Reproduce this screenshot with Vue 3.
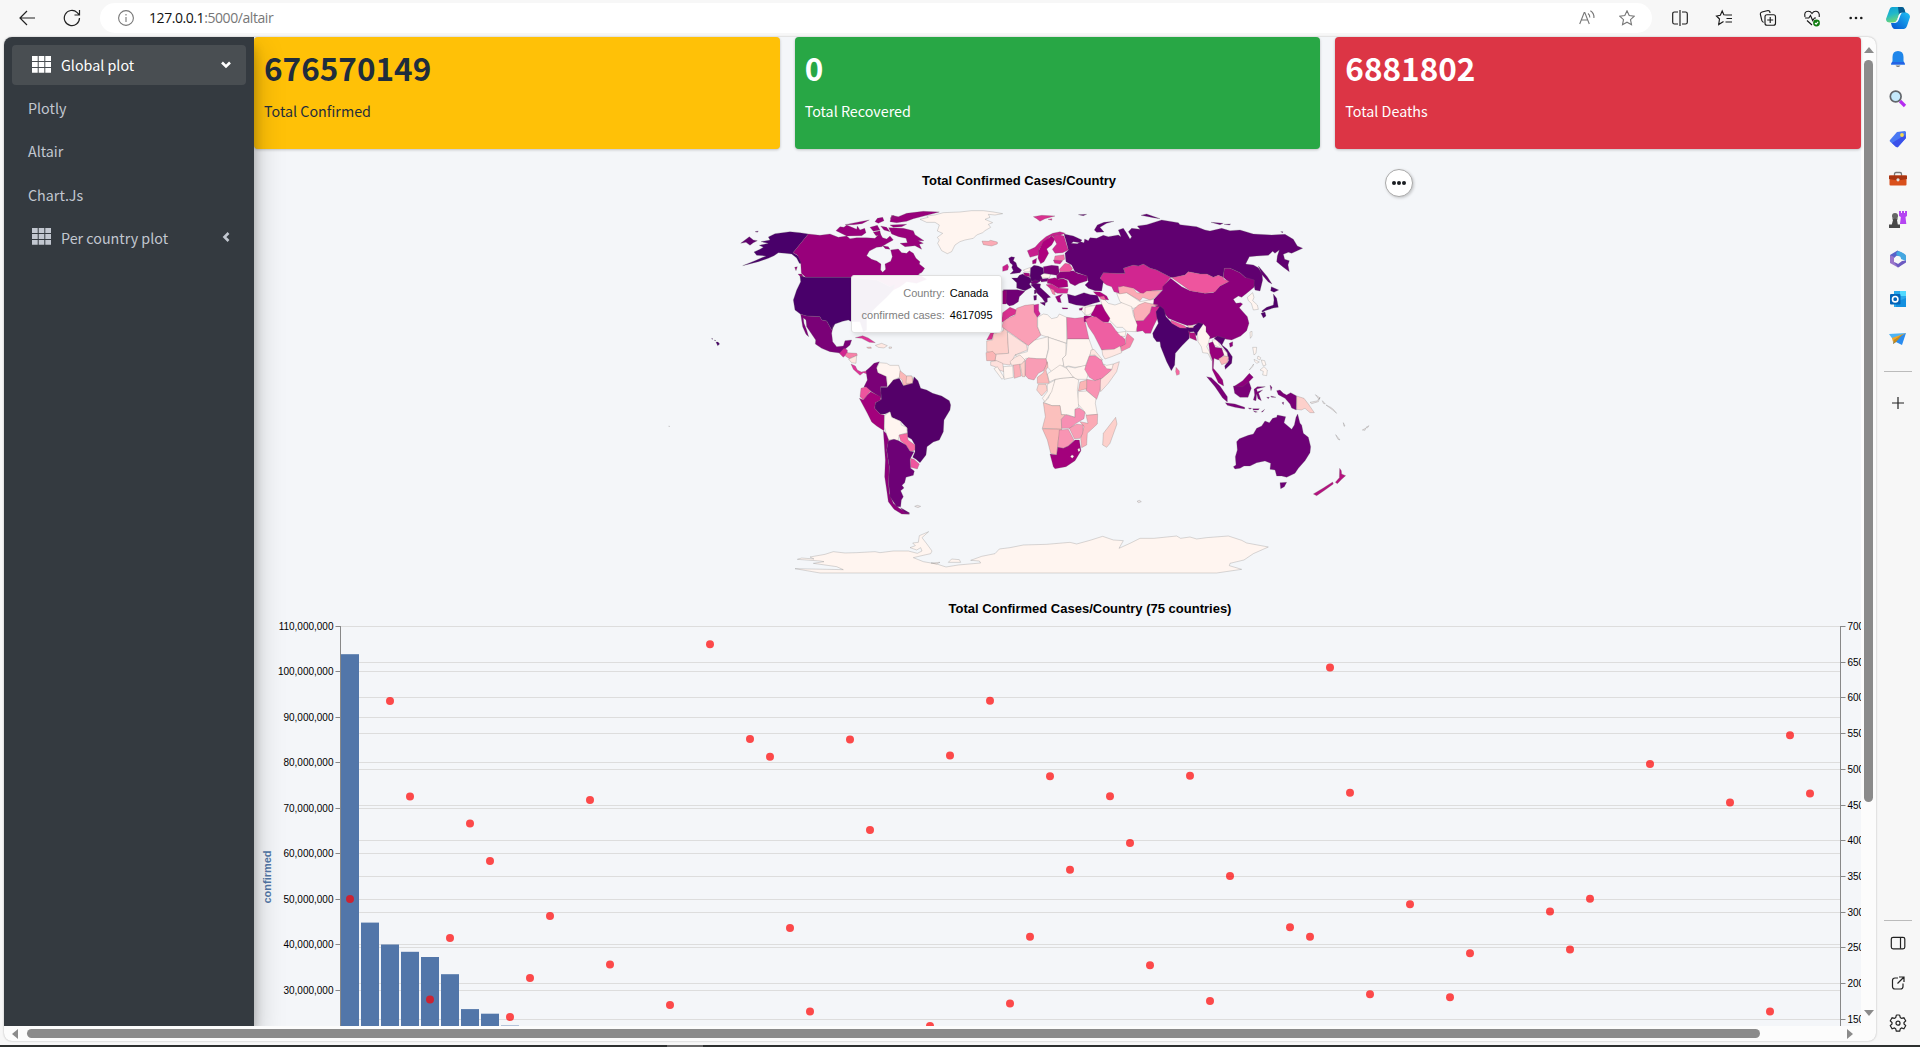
<script setup>
const cards = [
  { value: '676570149', label: 'Total Confirmed', tone: 'warning' },
  { value: '0', label: 'Total Recovered', tone: 'success' },
  { value: '6881802', label: 'Total Deaths', tone: 'danger' },
]

// Country outlines, grouped by region; each group has its own origin and a 3:1 grid.
const c = (fill, d) => ({ fill, d })
const regions = [
  {
    origin: '660 190',
    shapes: [
      c('#49006a', 'M282,186L300,178 310,172 298,166 325,160 303,155 330,150 325,141 345,131 390,125 420,128 445,132 399,188 410,195 424,205 428,222 418,220 410,204 395,192 375,190 355,188 342,197 325,205 295,215 248,227 285,212 318,198 290,196Z'),
      c('#60006e', 'M242,160L255,150 268,140 280,150 292,152 280,158 270,166 258,157ZM285,125L295,123 292,127Z'),
      c('#98007b', 'M445,132L480,136 510,132 535,142 560,138 570,146 590,143 620,143 645,145 660,130 668,143 680,147 690,138 700,150 682,160 665,170 650,172 628,183 620,197 635,208 650,213 663,222 662,240 668,247 677,238 675,222 692,214 697,200 692,180 715,177 725,188 740,190 748,182 760,190 768,205 780,215 778,222 794,235 786,247 775,253 800,268 770,280 740,275 720,290 700,300 690,290 650,270 575,262 437,262 424,250 422,215 412,195 399,188ZM404,232L412,230 408,242ZM414,252L425,252 437,270 428,268Z'),
      c('#98007b', 'M528,122L540,110 552,112 560,105 590,118 592,108 600,120 614,115 618,128 605,137 560,138ZM555,104L600,95 628,90 606,101 580,104ZM645,95L652,85 668,82 672,92 655,100ZM630,112L652,106 660,120 640,124ZM662,108L680,112 690,125 672,120ZM690,95L695,76 715,80 740,70 790,64 838,66 800,76 760,86 740,94 710,98ZM690,105L740,103 725,110 700,112ZM686,113L730,115 760,122 765,134 792,152 775,152 790,160 778,163 785,178 765,167 735,170 720,160 742,158 738,145 716,140 695,132ZM640,127L660,122 662,135 648,137ZM668,167L685,170 690,178 676,176ZM690,85L702,76 706,84Z'),
      c('#49006a', 'M437,262L575,262 650,270 690,290 705,283 700,300 680,322 655,345 620,380 620,420 610,425 600,395 575,395 565,390 548,394 525,402 515,420 500,393 485,390 480,380 440,378 422,373 405,360 400,330 410,300 422,275 420,258Z'),
      c('#7a0177', 'M422,373L440,378 480,380 485,390 500,393 515,420 520,405 515,430 518,455 530,470 550,468 555,452 575,450 570,465 555,478 545,490 510,485 485,475 466,462 467,450 440,410 438,390 430,384 432,400 440,420 446,440 438,433 428,410Z'),
      c('#d12690', 'M538,490L552,475 562,480 562,490 550,502Z'),
      c('#f781a8', 'M560,488L590,490 592,496 578,502 568,506 555,497Z'),
      c('#fee7e1', 'M566,508L590,497 588,520 575,518Z'),
      c('#dd3497', 'M573,522L586,528 592,540 604,546 622,542 622,552 610,548 600,556 580,538ZM586,443L608,437 625,444 646,458 628,457 605,445Z'),
      c('#fbb8b8', 'M620,472L633,471 634,475 624,475Z'),
      c('#ffe9e3', 'M646,466L665,460 682,467 672,474 655,472ZM687,471L695,471 694,475 687,475Z'),
      c('#49006a', 'M168,456L174,456 179,462 173,467ZM155,445L159,447 156,448ZM163,450L168,452 165,453Z'),
      c('#fff5f0', 'M780,88L805,82 800,78 825,75 850,68 900,66 935,62 970,62 1000,66 1028,71 1005,75 985,73 990,82 975,88 998,98 985,103 992,112 975,122 968,128 950,135 940,145 915,150 900,155 885,165 875,185 862,191 845,182 833,160 838,150 832,142 848,130 832,123 838,105 825,97 800,97Z'),
    ],
  },
  {
    origin: '960 190',
    shapes: [
      c('#fbaab5', 'M66,153L85,154 92,151 112,156 112,162 95,168 70,164Z'),
      c('#d9308f', 'M220,80L245,76 285,78 255,86 240,94 230,86ZM264,88L276,86 275,91Z'),
      c('#fff5f0', 'M360,356L380,345 405,348 408,360 392,370 378,377ZM470,310L500,308 540,335 580,328 590,340 555,345 520,355 500,350 480,335ZM240,250L272,252 268,264 245,264ZM190,240L212,232 210,245 196,246Z'),
      c('#d12690', 'M420,265L430,248 470,250 495,250 490,235 520,225 535,228 550,222 570,234 590,240 632,262 618,280 608,300 575,302 550,315 520,295 475,290 478,310 462,305 455,290 440,285 430,278Z'),
      c('#600070', 'M312,132L340,138 366,150 360,158 340,155 334,160 352,161 362,155 372,158 374,147 385,152 390,143 410,145 430,136 445,140 475,135 483,140 475,120 490,115 500,130 510,147 515,140 505,125 515,115 540,118 532,108 560,104 605,90 655,98 660,104 710,110 735,120 750,123 785,115 810,122 840,120 880,132 935,135 975,133 1000,148 1012,168 1028,175 1005,185 995,190 985,187 970,193 974,208 988,212 984,225 988,245 968,230 950,215 952,198 958,180 945,190 938,184 925,196 890,198 868,200 857,222 880,225 895,233 906,250 908,270 900,303 885,300 880,278 855,262 840,248 810,235 793,235 790,262 775,256 760,262 740,252 720,252 685,245 675,255 640,263 632,262 590,240 570,234 550,222 535,228 520,225 490,235 495,250 470,250 430,248 420,265 430,275 425,303 405,302 385,295 375,285 385,275 380,258 345,245 335,225 318,215 315,190 325,180 320,160Z'),
      c('#600070', 'M895,228L902,236 922,260 936,282 925,276 905,253ZM403,120L412,105 432,97 462,94 440,100 420,112 432,126 410,127ZM543,76L560,72 600,86 580,83ZM355,74L380,73 370,77ZM753,97L790,100 780,104ZM792,103L812,102 808,105ZM962,125L969,125 968,128Z'),
      c('#8c007b', 'M582,328L608,300 608,290 632,265 665,290 690,302 735,310 760,308 780,288 805,275 790,262 793,235 810,235 840,248 855,262 883,270 882,292 862,308 845,322 835,318 820,328 828,340 842,338 848,342 838,353 862,380 867,400 860,422 842,438 815,450 800,448 770,440 745,448 730,440 720,410 710,402 685,408 650,395 625,385 605,360 580,345Z'),
      c('#ee559e', 'M635,263L675,255 685,245 720,252 740,252 760,262 775,256 790,262 792,268 808,274 780,288 765,306 735,310 690,302 665,284Z'),
      c('#fff5f0', 'M862,322L878,308 882,322 878,332 892,345 895,358 880,360 874,340 865,332Z'),
      c('#50006a', 'M932,302L934,290 956,300 942,307ZM940,312L950,325 955,352 940,354 915,362 908,367 905,363 920,352 940,345 942,330ZM903,370L915,366 918,378 910,384Z'),
      c('#fbaab5', 'M475,292L490,288 520,295 530,308 550,310 560,303 605,302 582,325 570,330 548,322 540,332 500,308 478,312Z'),
      c('#fbb0b8', 'M520,360L535,345 555,337 575,342 595,345 575,350 570,368 550,392 525,393Z'),
      c('#d12690', 'M527,393L550,392 570,368 575,350 598,350 605,362 590,390 580,410 572,430 555,430 548,422 530,425Z'),
      c('#fff5f0', 'M420,325L430,325 445,340 465,345 485,338 515,350 520,375 532,405 528,425 500,424 488,412 470,412 450,392 435,372 428,350Z'),
      c('#c71f8e', 'M202,182L225,172 240,155 258,140 278,130 300,125 316,130 300,136 270,140 250,160 238,178 235,195 210,202Z'),
      c('#ae017e', 'M236,182L250,155 275,138 285,148 275,165 260,177 266,190 252,215 242,221 234,205Z'),
      c('#cf2590', 'M278,138L298,134 312,138 320,165 325,180 308,188 285,190 277,178 290,162Z'),
      c('#f26fa7', 'M285,198L312,194 314,208 300,215 282,212Z'),
      c('#d12690', 'M280,210L308,212 300,222 284,220Z'),
      c('#5a006e', 'M146,205L154,200 164,202 160,212 168,218 172,230 185,240 180,248 150,252 160,242 155,232 158,225 150,218Z'),
      c('#c91f8c', 'M128,230L142,222 146,230 143,240 128,244Z'),
      c('#540069', 'M155,264L172,264 178,256 188,252 212,264 215,275 208,282 215,292 195,302 170,294 170,278Z'),
      c('#700075', 'M130,299L172,299 195,304 178,320 175,335 160,345 148,348 138,340Z'),
      c('#940078', 'M128,302L140,302 138,342 128,342Z'),
      c('#540069', 'M212,234L222,226 235,228 250,234 252,250 242,256 248,268 236,276 214,274 210,258Z'),
      c('#a3017c', 'M190,248L208,250 210,260 195,258ZM217,212L230,205 228,220 218,222Z'),
      c('#7a0177', 'M250,230L275,226 295,228 298,250 290,256 252,250Z'),
      c('#700075', 'M212,276L225,270 240,274 225,284 215,282ZM240,268L265,265 262,274 244,276Z'),
      c('#8c007b', 'M290,256L300,246 340,242 352,250 382,258 382,272 358,280 345,287 330,280 325,270 310,265 290,268Z'),
      c('#ee559e', 'M298,238L315,220 328,222 338,236 330,245 300,245Z'),
      c('#a8017d', 'M262,268L285,263 295,268 310,266 322,272 324,290 295,294 275,282 262,280Z'),
      c('#d12690', 'M258,284L275,282 295,294 325,296 322,310 292,310 278,302Z'),
      c('#f781a8', 'M270,295L282,300 286,315 278,312Z'),
      c('#98007b', 'M286,320L308,312 300,322 304,338 294,336ZM306,353L324,354 322,357 308,357Z'),
      c('#5d006d', 'M212,284L225,280 242,282 240,292 262,312 272,322 262,324 262,336 256,338 246,324 230,308 225,296ZM240,338L256,336 255,347ZM223,300L229,300 229,310 223,312ZM221,317L230,316 229,330 222,331Z'),
      c('#5d0071', 'M322,312L345,318 372,308 392,314 412,316 420,335 402,340 375,348 348,345 326,338Z'),
      c('#b1017e', 'M400,305L420,306 440,318 446,330 430,328 410,316Z'),
      c('#f0629f', 'M418,320L432,318 438,330 424,328Z'),
      c('#98007b', 'M357,356L368,353 366,360 359,361Z'),
    ],
  },
  {
    origin: '960 290',
    shapes: [
      c('#d9308f', 'M128,68L150,52 170,60 168,72 150,80 140,88 122,100 126,84ZM80,150L92,128 102,128 96,148Z'),
      c('#fdd0cb', 'M80,153L98,150 100,132 130,122 130,112 142,125 146,190 108,193 100,190 80,185Z'),
      c('#faa0b6', 'M130,95L140,87 165,76 170,55 195,46 222,43 224,68 232,80 232,110 243,135 205,167 125,110Z'),
      c('#cf2590', 'M222,45L236,42 236,62 241,72 232,82 222,66Z'),
      c('#fff5f0', 'M233,82L250,72 262,74 275,86 292,82 298,72 320,82 320,160 265,142 243,135 233,110Z'),
      c('#f06fa8', 'M320,82L345,85 372,82 376,98 387,147 322,147Z'),
      c('#fee0dc', 'M108,193L146,190 142,125 200,165 202,180 165,195 150,225 128,222 105,212Z'),
      c('#fff5f0', 'M165,195L202,185 205,167 225,150 265,140 265,175 258,208 198,205 192,210Z'),
      c('#fff5f0', 'M265,142L318,160 318,195 308,205 312,225 275,245 262,230 258,208 266,178Z'),
      c('#fff5f0', 'M322,147L387,147 398,178 388,198 376,228 345,232 325,228 312,232 308,205 318,195Z'),
      c('#fff5f0', 'M325,230L345,234 376,226 385,250 380,268 350,268 335,258 318,232Z'),
      c('#f77fae', 'M388,198L405,197 425,210 430,225 455,240 430,264 405,272 388,262 374,238Z'),
      c('#fee7e1', 'M393,180L402,178 428,210 420,208 405,195 390,196Z'),
      c('#fff5f0', 'M430,222L440,226 460,222 460,238 440,236Z'),
      c('#fee0dc', 'M460,222L478,215 470,245 445,280 422,305 418,272 455,240Z'),
      c('#f994b3', 'M380,268L405,272 422,266 420,300 410,328 378,300Z'),
      c('#fbb5b5', 'M360,276L380,270 380,296 355,303Z'),
      c('#fff5f0', 'M355,305L380,303 408,326 406,340 412,373 380,376 368,358 352,340Z'),
      c('#fff5f0', 'M285,268L310,264 340,262 356,270 352,300 356,350 345,358 345,382 325,375 304,374 300,347 276,347 250,337 265,325Z'),
      c('#fff5f0', 'M262,252L300,225 320,235 340,262 310,264 285,268 268,276Z'),
      c('#f99db5', 'M197,210L205,203 230,206 258,206 262,222 250,242 235,250 222,270 205,266 195,255Z'),
      c('#fbb8b8', 'M262,215L264,230 258,240 268,280 232,280 232,262 250,248Z'),
      c('#fbb5b5', 'M78,188L98,184 108,195 105,212 80,212Z'),
      c('#fee0dc', 'M92,215L110,212 128,220 132,245 118,240 105,230 92,226Z'),
      c('#fff5f0', 'M102,236L112,230 132,262 126,268ZM130,230L158,228 160,262 132,268Z'),
      c('#fbb0b8', 'M160,222L178,220 184,258 163,265Z'),
      c('#fdd0cb', 'M180,222L195,212 195,260 187,260Z'),
      c('#fee7e1', 'M150,215L165,202 180,195 195,210 185,222 155,226Z'),
      c('#fdd0cb', 'M235,283L258,283 262,300 245,318 230,300Z'),
      c('#fff5f0', 'M262,283L285,270 275,305 255,335 247,325 262,305Z'),
      c('#fbc0bd', 'M250,338L276,347 300,347 304,374 316,374 304,388 305,418 247,415 256,380Z'),
      c('#f78fb3', 'M304,388L318,374 345,382 345,358 358,354 375,366 372,386 348,400 330,415 305,415Z'),
      c('#fbaab5', 'M378,376L413,373 412,402 382,430 380,465 365,473 362,445 372,410 360,395 384,400Z'),
      c('#fbb5b5', 'M247,416L305,418 295,450 290,495 272,490 262,450Z'),
      c('#f994b3', 'M298,420L325,418 342,450 325,468 310,475 293,472Z'),
      c('#f99db5', 'M328,415L350,402 370,405 368,430 360,445 343,446Z'),
      c('#a3017c', 'M270,492L290,495 293,472 310,475 325,468 345,450 358,450 363,482 345,512 318,530 285,536 280,530Z'),
      c('#fff5f0', 'M331,500L336,494 342,499 337,505ZM353,478L358,474 361,482 355,485Z'),
      c('#fdd0cb', 'M467,382L471,402 450,460 440,472 428,465 430,430Z'),
      c('#fff5f0', 'M375,52L412,45 405,62 385,75 375,75Z'),
      c('#a8017d', 'M372,78L395,78 385,95 372,95ZM400,62L408,45 425,43 435,62 450,85 445,97 425,95 405,82 392,76Z'),
      c('#ee5fa2', 'M376,88L392,80 408,80 430,96 452,100 468,122 495,148 497,165 462,178 425,180 402,135 385,110Z'),
      c('#ffe8e3', 'M426,180L462,178 480,168 485,188 455,200 435,207 428,195Z'),
      c('#f781a8', 'M482,170L497,162 497,145 502,130 522,147 510,172 485,184Z'),
      c('#fff5f0', 'M472,128L498,124 495,140 482,138Z'),
    ],
  },
  {
    origin: '1140 310',
    shapes: [
      c('#4d006b', 'M48,5L60,-12 72,-2 78,20 95,38 115,50 145,52 160,50 175,38 190,42 186,58 176,68 168,78 162,65 148,66 148,85 125,108 106,130 104,165 94,182 80,155 62,110 60,95 50,95 40,82 38,70 55,40 50,20Z'),
      c('#ee559e', 'M92,30L135,48 140,55 120,54 95,40Z'),
      c('#fdd0c8', 'M143,46L160,47 160,53 146,53Z'),
      c('#b0127f', 'M145,62L152,68 165,68 170,92 150,84Z'),
      c('#fff5f0', 'M172,68L190,42 198,50 198,65 210,80 205,100 200,110 208,125 215,152 204,130 188,128 184,110 174,95Z'),
      c('#fff5f0', 'M216,90L235,88 238,105 262,130 262,140 252,138 245,115 222,105Z'),
      c('#98007b', 'M206,100L218,95 226,112 245,115 252,135 235,150 222,145 220,175 235,192 248,210 251,228 235,218 217,180 217,150 210,130Z'),
      c('#5a006e', 'M222,85L232,78 256,85 246,105 262,118 277,140 275,160 256,178 254,168 266,152 262,128 240,100Z'),
      c('#fbb5b8', 'M236,146L252,138 266,140 262,158 245,164Z'),
      c('#8c007b', 'M268,100L278,95 278,108 270,112Z'),
      c('#fff5f0', 'M330,66L336,64 336,78 331,85ZM338,112L350,112 348,130 342,135ZM354,138L362,143 360,150 352,146ZM342,148L358,156 350,160 344,154ZM364,150L374,152 378,165 370,168 366,158ZM360,180L372,170 382,180 380,197 368,195 370,184ZM328,180L341,162 338,170Z'),
      c('#f768a1', 'M108,172L118,183 118,193 110,196 107,185Z'),
      c('#7a0177', 'M200,200L214,203 240,228 262,260 262,276 248,264 225,230ZM256,278L285,282 314,292 314,297 285,292 262,286ZM325,294L335,295 330,298ZM338,296L358,296 355,300 340,300ZM340,302L352,306 345,307ZM364,306L374,298 368,306Z'),
      c('#7a0177', 'M280,228L290,228 312,215 326,212 334,235 324,262 300,262 284,250Z'),
      c('#8c007b', 'M284,228L308,212 328,190 340,202 326,216 308,230Z'),
      c('#7a0177', 'M342,238L352,230 376,230 350,237 352,245 368,240 356,250 364,272 354,266 350,252 348,272 340,270 344,255ZM390,225L396,232 393,242ZM392,258L408,262 395,262ZM380,262L388,262 385,266ZM410,242L420,240 430,250 440,255 452,248 470,258 469,300 455,294 450,282 435,265 415,254ZM426,278L431,276 430,284Z'),
      c('#fdd0cb', 'M470,258L492,265 505,282 523,308 510,308 495,295 484,300 470,298Z'),
      c('#eee6e6', 'M510,277L530,273 538,266 540,262 535,275 515,281ZM526,254L540,264 537,268ZM547,272L556,282 550,280ZM558,285L572,292 580,298 590,310 578,300ZM610,338L615,348 612,349ZM587,374L600,390 594,388ZM667,360L678,354 675,361ZM678,352L687,347 682,354Z'),
      c('#6d0176', 'M280,470L288,465 286,440 292,420 290,395 298,386 325,376 340,372 350,355 365,348 375,333 388,338 398,325 410,322 412,315 437,320 432,338 455,358 463,345 468,322 473,312 480,340 485,345 490,370 505,382 512,410 510,428 495,452 475,475 465,490 440,502 425,498 410,498 405,480 390,478 392,460 375,453 350,458 330,468 312,468 300,475 285,477ZM420,518L440,517 433,530 422,536Z'),
      c('#b5127f', 'M599,475L604,482 605,492 617,497 605,508 592,521 586,517 598,503ZM520,552L550,534 578,516 580,522 555,540 530,557Z'),
    ],
  },
  {
    origin: '780 340',
    shapes: [
      c('#7a0177', 'M258,92L270,82 282,70 298,65 290,82 294,98 318,106 320,122 322,140 302,140 304,175 290,165 270,152 252,140 262,120Z'),
      c('#fff5f0', 'M290,85L298,68 320,70 330,76 356,76 362,95 358,112 340,120 335,138 322,142 320,110 294,98Z'),
      c('#fbb8b8', 'M360,92L380,108 395,108 400,122 394,132 370,137 366,120 358,112Z'),
      c('#fdd0cb', 'M380,108L396,108 398,130 378,130Z'),
      c('#540069', 'M302,142L322,142 340,120 358,115 370,137 398,130 402,110 414,122 422,145 440,150 458,160 485,168 508,182 512,195 510,210 492,240 490,275 478,300 460,306 441,320 438,345 420,368 408,358 398,352 405,335 405,315 395,298 382,290 382,265 362,244 335,232 330,215 315,222 300,222 284,205 286,188 304,178Z'),
      c('#ee559e', 'M243,145L258,140 272,152 262,165 250,180 240,170Z'),
      c('#a3017c', 'M238,175L250,180 262,165 272,155 302,170 302,180 286,188 284,205 300,222 313,225 312,272 290,258 275,246 262,220Z'),
      c('#fff5f0', 'M314,226L330,215 335,232 362,244 364,255 380,262 382,278 358,285 354,302 342,298 325,300 313,262Z'),
      c('#f768a1', 'M357,285L382,280 384,300 405,315 405,330 392,335 378,315 362,302Z'),
      c('#ee559e', 'M391,355L402,358 418,372 412,387 392,382Z'),
      c('#8c007b', 'M310,272L318,280 326,300 320,330 328,380 326,430 328,460 340,490 358,505 386,518 388,523 365,522 342,508 325,485 320,450 314,410 316,360Z'),
      c('#6d0176', 'M325,302L342,298 356,302 378,315 390,334 402,335 390,358 392,385 403,393 400,406 378,412 374,428 366,436 372,444 362,452 370,470 364,480 362,500 350,500 330,470 326,430 328,380 320,330ZM362,503L390,520 375,519Z'),
      c('#eee6e6', 'M404,499L412,496 422,499 414,503Z'),
    ],
  },
  {
    origin: '900 165',
    shapes: [
      c('#fff5f0', 'M-315,1211L-170,1214 -190,1205 -225,1200 -260,1195 -228,1190 -240,1188 -308,1183 -295,1179 -258,1182 -270,1176 -225,1168 -200,1160 -165,1164 -130,1163 -75,1160 -60,1163 -20,1158 25,1158 52,1165 66,1158 62,1148 50,1155 30,1148 46,1142 38,1134 55,1132 58,1112 86,1100 66,1118 80,1136 96,1158 92,1166 65,1172 40,1178 70,1190 110,1197 138,1206 175,1200 242,1194 238,1188 212,1186 245,1174 285,1166 298,1152 330,1148 370,1140 440,1138 510,1132 530,1137 570,1126 608,1114 640,1125 670,1127 657,1150 690,1135 720,1120 762,1120 830,1113 842,1120 870,1116 890,1122 920,1118 985,1113 1025,1126 1040,1134 1105,1146 1060,1166 1032,1185 990,1195 988,1202 1025,1213 950,1224 -240,1224ZM145,1192L155,1182 178,1184 182,1192ZM93,1194L120,1192 110,1197Z'),
      c('#eee6e6', 'M711,1009L718,1006 724,1010 716,1013ZM-694,783L-692,783 -692,785Z'),
    ],
  },
]

const plot = { left: 341, top: 626.5, right: 1840.5, height: 500 }
const leftTicks = Array.from({ length: 9 }, (_, i) => ({
  y: plot.top + Math.round((i * plot.height) / 11),
  label: `${110 - i * 10},000,000`,
}))
const rightTicks = Array.from({ length: 12 }, (_, i) => ({
  y: plot.top + Math.round((i * plot.height) / 14),
  label: `${700 - i * 50}`,
}))
const bars = [654.2, 922.6, 944.5, 951.8, 957, 974.2, 1009.1, 1013.7, 1025.6]
// [country index, vertical position]
const dots = [
  [0, 899], [2, 701], [3, 796.5], [4, 999.5], [5, 938], [6, 823.5], [7, 861], [8, 1017], [9, 978], [10, 916],
  [12, 800], [13, 964.5], [16, 1005], [18, 644.3], [20, 739], [21, 756.8], [22, 928], [23, 1011.5], [25, 739.5],
  [26, 830], [29, 1026], [30, 755.5], [32, 700.7], [33, 1003.5], [34, 936.8], [35, 776.3], [36, 869.8],
  [38, 796.3], [39, 843], [40, 965.3], [42, 775.7], [43, 1001], [44, 876], [47, 927.3], [48, 936.8], [49, 667.5],
  [50, 792.7], [51, 994.3], [53, 904.3], [55, 997.3], [56, 953.2], [60, 911.6], [61, 949.6], [62, 898.8],
  [65, 764], [69, 802.6], [71, 1011.5], [72, 735.3], [73, 793.5],
]
</script>

<template>
  <div class="window">
    <header class="toolbar">
      <svg class="nav back" viewBox="0 0 18 18"><path d="M9 2 2 9l7 7M2 9h15" /></svg>
      <svg class="nav reload" viewBox="0 0 18 18"><path d="M16.500 9A7.600 7.600 0 1 1 14.200 3.600L16.300 5.800M16.500 1v5h-5" /></svg>
      <div class="address">
        <svg class="info" viewBox="0 0 16 16"><circle cx="8" cy="8" r="7.400" /><path d="M8 7v5M8 4v1.500" /></svg>
        <span class="url">127.0.0.1<span class="path">:5000/altair</span></span>
        <svg class="read" viewBox="0 0 16 16"><path d="M.7 14 5.200 2.500h.6L10.300 14M2.300 10h6.500M9 3.500q2 1.500 1.800 4M11.400.800q4 2.600 3.500 7.200" /></svg>
        <svg class="star" viewBox="0 0 16 16"><path d="m8 .8 2.200 4.700 5.100.600-3.800 3.500 1 5.100L8 12.200l-4.500 2.500 1-5.100L.700 6.100l5.100-.600z" /></svg>
      </div>
      <div class="tools">
        <svg viewBox="0 0 16 16"><path d="M6 2H2.500Q.700 2 .700 3.800v8.400Q.700 14 2.500 14H6M10 2h3.500q1.800 0 1.800 1.800v8.400q0 1.800-1.800 1.800H10M8 0v16" /></svg>
        <svg viewBox="0 0 16 16"><path d="M10.500 5 7.800 4.800 6.200 1 4.300 5.300.500 6l3 3-.8 5.500 4.800-3M10 5h6M10.500 8.500H16M9.500 12H16" /></svg>
        <svg viewBox="0 0 16 16"><path d="M3.500 12.500Q1.500 11.500 1.500 9L.300 4Q.300 2.500 2 2L8 .500q2 0 2 2.500" /><rect x="5" y="4.700" width="10.500" height="10.500" rx="2" /><path d="M10.200 7v6M7.200 10h6" /></svg>
        <svg viewBox="0 0 16 16"><path d="M1 7Q-.300 1.500 4.200 1.300 6.500 1.200 8 3.500q1.500-2.300 4-2.200Q16 1.700 15.200 7M1 8h3.800l1.700-2.500 2.200 5L10.500 8H12M3 10.500l5 4.500" /><circle class="ok" cx="12.500" cy="13" r="3.400" /><path class="tick" d="m11 13 1.100 1.100 2-2.200" /></svg>
        <svg viewBox="0 0 16 16"><g class="solid"><circle cx="2.700" cy="8" r="1.300" /><circle cx="8" cy="8" r="1.300" /><circle cx="13.300" cy="8" r="1.300" /></g></svg>
      </div>
      <svg class="copilot" viewBox="0 0 24 24">
        <defs>
          <linearGradient id="cpa" x1="0" y1="0" x2=".4" y2="1"><stop offset="0" stop-color="#0c9ed9" /><stop offset=".5" stop-color="#21b8ca" /><stop offset="1" stop-color="#72d86f" /></linearGradient>
          <linearGradient id="cpb" x1="1" y1="0" x2="0" y2="1"><stop offset="0" stop-color="#1fc2f5" /><stop offset="1" stop-color="#0650cf" /></linearGradient>
        </defs>
        <path d="M6 1h10q2 0 2.700 3L19.500 7h-4q-2 0-2.700 2.200L11 14Q10 16.500 7 16.500H4Q0 16.500 0 13L3.500 3.500Q4 1 6 1Z" fill="url(#cpa)" />
        <path d="M12 1h4q2 0 2.700 3l.8 3h-4q-2 0-2.500 2Z" fill="#075c91" />
        <path d="M17.500 6.500H20q4 1 4 4.500l-3 9q-1 3-3 3H9q-3 0-4-6h3q2 0 2.700-2l2.600-6Q14 6.500 17.500 6.500Z" fill="url(#cpb)" />
        <path d="M14.500 7q-1.200.5-1.700 2.200l-1.800 5Q10 16.500 7.500 16.600l1.500.2q2.500 0 3.500-2.500l2-5.300q.6-2 2.500-2.400Z" fill="#fff" />
      </svg>
    </header>

    <div class="middle">
      <div class="page">
        <div class="viewport">
          <aside class="menu">
            <a class="item parent active">
              <svg class="grid" viewBox="0 0 19 17"><path d="M0 0h5.700v5H0zM6.700 0h5.600v5H6.700zM13.300 0H19v5h-5.700zM0 6h5.700v5H0zM6.700 6h5.600v5H6.700zM13.300 6H19v5h-5.700zM0 12h5.700v4.700H0zM6.700 12h5.600v4.700H6.700zM13.300 12H19v4.700h-5.700z" /></svg>
              <span>Global plot</span>
              <svg class="chev" viewBox="0 0 12 12"><path d="m2 3.500 4 4 4-4" /></svg>
            </a>
            <a class="item">Plotly</a>
            <a class="item">Altair</a>
            <a class="item">Chart.Js</a>
            <a class="item parent">
              <svg class="grid" viewBox="0 0 19 17"><path d="M0 0h5.700v5H0zM6.700 0h5.600v5H6.700zM13.300 0H19v5h-5.700zM0 6h5.700v5H0zM6.700 6h5.600v5H6.700zM13.300 6H19v5h-5.700zM0 12h5.700v4.700H0zM6.700 12h5.600v4.700H6.700zM13.300 12H19v4.700h-5.700z" /></svg>
              <span>Per country plot</span>
              <svg class="chev" viewBox="0 0 12 12"><path d="m8.500 1-4 4 4 4" /></svg>
            </a>
          </aside>

          <main class="content">
            <section class="cards">
              <div v-for="card in cards" :key="card.label" class="card" :class="card.tone">
                <h3>{{ card.value }}</h3>
                <p>{{ card.label }}</p>
              </div>
            </section>

            <section class="map">
              <svg class="canvas" viewBox="254 149 1607 451">
                <text class="title" x="1019" y="185">Total Confirmed Cases/Country</text>
                <g v-for="r in regions" :key="r.origin" class="land" :transform="`translate(${r.origin}) scale(0.33333)`">
                  <path v-for="(s, i) in r.shapes" :key="i" :d="s.d" :fill="s.fill" />
                </g>
              </svg>
              <table class="tip">
                <tbody>
                  <tr><td class="key">Country:</td><td>Canada</td></tr>
                  <tr><td class="key">confirmed cases:</td><td>4617095</td></tr>
                </tbody>
              </table>
              <button class="actions"><svg viewBox="0 0 14 14"><circle cx="2" cy="7" r="2" /><circle cx="7" cy="7" r="2" /><circle cx="12" cy="7" r="2" /></svg></button>
            </section>

            <section class="chart">
              <svg class="canvas" viewBox="254 600 1607 426">
                <text class="title" x="1090" y="613">Total Confirmed Cases/Country (75 countries)</text>
                <g class="gridlines">
                  <path v-for="t in leftTicks" :key="t.y" :d="`M341 ${t.y}H1840`" />
                  <path v-for="t in rightTicks" :key="t.y" :d="`M341 ${t.y}H1840`" />
                </g>
                <g class="bars">
                  <rect v-for="(y, i) in bars" :key="i" :x="plot.left + i * 20" :y="y" width="18" :height="1127 - y" />
                </g>
                <g class="axis">
                  <path d="M340.500 626V1026M1840.500 626V1026" />
                  <path v-for="t in leftTicks" :key="t.y" :d="`M335.500 ${t.y}H340.500`" />
                  <path v-for="t in rightTicks" :key="t.y" :d="`M1840.500 ${t.y}H1845.500`" />
                </g>
                <g class="labels">
                  <text v-for="t in leftTicks" :key="t.label" class="end" x="333.500" :y="t.y + 3">{{ t.label }}</text>
                  <text v-for="t in rightTicks" :key="t.label" x="1847.500" :y="t.y + 3">{{ t.label }}</text>
                </g>
                <text class="ytitle" transform="translate(271 877) rotate(-90)">confirmed</text>
                <g class="dots">
                  <circle v-for="d in dots" :key="d[0]" :cx="350 + d[0] * 20" :cy="d[1]" r="4" />
                </g>
              </svg>
            </section>
          </main>

          <div class="vbar">
            <svg viewBox="0 0 10 6"><path d="M5 0 10 6H0z" /></svg>
            <i></i>
            <svg viewBox="0 0 10 6"><path d="M5 6 10 0H0z" /></svg>
          </div>
        </div>
        <div class="hbar">
          <svg viewBox="0 0 6 10"><path d="M6 0v10L0 5z" /></svg>
          <i></i>
          <svg viewBox="0 0 6 10"><path d="M0 0v10l6-5z" /></svg>
        </div>
      </div>

      <nav class="rail">
        <svg viewBox="0 0 18 18"><path d="M9 1q5.500 0 5.500 6v4l1.500 3.500H2L3.500 11V7Q3.500 1 9 1Z" fill="#1f86ea" /><path d="M3 12h12l1 2.500H2Z" fill="#2563e5" /><path d="M6.500 15.500h5Q9 18.500 6.500 15.500Z" fill="#777" /></svg>
        <svg viewBox="0 0 18 18"><path d="m11 11 5 5" stroke="#b52df0" stroke-width="3.200" /><circle cx="6.700" cy="6.500" r="5.400" fill="#c5e9fc" stroke="#62666b" stroke-width="1.700" /></svg>
        <svg viewBox="0 0 18 18"><path d="m1 10 7-8 8-1 1 1v6l-8 9Q8 18 6 16l-4.500-4Q0 11 1 10Z" fill="#4a78f3" /><path d="m3 13 13-8 1 3-8 9Q8 18 6 16Z" fill="#3b51ea" /><circle cx="13" cy="5" r="1.900" fill="#f7d94c" /></svg>
        <svg viewBox="0 0 18 18"><path d="M5.500 6V4Q5.500 2.500 7 2.500h4Q12.500 2.500 12.500 4v2" fill="none" stroke="#777" stroke-width="1.300" /><rect x=".5" y="5.500" width="17" height="10" rx="1" fill="#d9501c" /><path d="M0 5.500h18v3.500l-9 1.500L0 9Z" fill="#a93411" /><circle cx="9" cy="9.800" r="1.600" fill="#ddd" /></svg>
        <svg viewBox="0 0 18 18"><path d="M10 1h2v2h1V1h2v2h1V1h2v5l-1.500 1 .8 7H11l.8-7L10 6Z" fill="#b545f2" /><circle cx="6" cy="6" r="3" fill="#666" /><path d="M3 8.500h6L8 10l.8 4.500H11V18H0v-3.500h2.800L4 10Z" fill="#494949" /></svg>
        <svg viewBox="0 0 18 18"><path d="M8.500.500 16.500 5v5l-4.500-2L8 5.500 5 8v5L1 11V5Z" fill="#5961c9" /><path d="M9 1q7 2 8 5v5l-5-2L8 5Q6 3 9 1Z" fill="#45a7e0" /><path d="m5 7-4-2v8l8 4.500 3-2L5 12Z" fill="#9a75ca" /><path d="m5 12 4 2 4-3 4-.5v2L9 17.500Z" fill="#6d5bc2" /><circle cx="9" cy="9" r="3" fill="#f7f7f7" /></svg>
        <svg viewBox="0 0 18 18"><path d="M5 1h12v16H5Z" fill="#28a8ea" /><path d="M11 1h6v5h-6Z" fill="#50d9ff" /><path d="m7 12 10-4v9H7Z" fill="#1490df" /><rect x="1" y="4" width="10.500" height="10.500" rx="1" fill="#0364b8" /><circle cx="6.200" cy="9.200" r="2.700" fill="none" stroke="#fff" stroke-width="1.600" /></svg>
        <svg viewBox="0 0 18 18"><path d="M0 4 17 3 5 11Z" fill="#4db4f5" /><path d="M17 3 4 12 3 8Z" fill="#f5a623" /><path d="m17 3-4 12-6-3-3 2 1-4Z" fill="#2a8cef" /><path d="m5 10 9-6-7 8-3 2Z" fill="#c88a18" /></svg>
        <hr class="upper" />
        <svg class="line" viewBox="0 0 18 18"><path d="M9 3v12M3 9h12" /></svg>
        <div class="gap"></div>
        <hr class="lower" />
        <svg class="line" viewBox="0 0 18 18"><rect x="2.300" y="3.300" width="13.500" height="11.500" rx="1.800" /><path d="M11.500 3.500v11" /></svg>
        <svg class="line" viewBox="0 0 18 18"><path d="M9 4H6Q3.500 4 3.500 6.500v6Q3.500 15 6 15h5.500Q14 15 14 12.500V9.500M10 3h5v5M15 3 8.500 9.500" /></svg>
        <svg class="line" viewBox="0 0 18 18"><path d="m7.300 1.300.6-.3h2.200l.6.3.6 2.300 1.300.8 2.300-.6 1.800 3-1.700 1.700v1.500l1.700 1.700-1.800 3-2.300-.7-1.300.8-.6 2.300H7.300l-.6-2.300-1.300-.8-2.300.7-1.800-3L3 10V8.500L1.300 6.800l1.800-3 2.300.6 1.300-.8Z" /><circle cx="9" cy="9.200" r="2" /></svg>
      </nav>
    </div>
    <footer class="taskbar"><i></i></footer>
  </div>
</template>

<style>
body {
  margin: 0;
  overflow: hidden;
}
</style>

<style scoped>
* {
  box-sizing: border-box;
}
.window {
  display: flex;
  flex-direction: column;
  width: 1920px;
  height: 1047px;
  background: #f7f7f7;
  font-family: "Liberation Sans", Arial, sans-serif;
}
svg {
  display: block;
  flex: none;
}

/* browser toolbar */
.toolbar {
  display: flex;
  align-items: center;
  height: 37px;
  padding-bottom: 1px;
  flex: none;
}
.nav {
  width: 18px;
  height: 18px;
  fill: none;
  stroke: #222;
  stroke-width: 1.2;
}
.back { margin-left: 18px; }
.reload { margin: 0 19px 0 27px; }
.address {
  display: flex;
  align-items: center;
  width: 1552px;
  height: 30px;
  border-radius: 15px;
  background: #fff;
  padding: 0 17px 0 18px;
}
.address svg {
  width: 16px;
  height: 16px;
  fill: none;
  stroke: #777;
  stroke-width: 1.1;
}
.url {
  flex: 1;
  margin-left: 15px;
  font: 14px/20px "Open Sans", sans-serif;
  letter-spacing: -0.43px;
  color: #111;
}
.path { color: #777; }
.address .star { margin-left: 24px; }
.tools {
  display: flex;
  gap: 28px;
  margin-left: 20px;
}
.tools svg {
  width: 16px;
  height: 16px;
  overflow: visible;
  fill: none;
  stroke: #1b1b1b;
  stroke-width: 1.15;
}
.tools .solid { fill: #1b1b1b; stroke: none; }
.tools .ok { fill: #107c10; stroke: none; }
.tools .tick { stroke: #fff; }
.copilot {
  width: 24px;
  height: 24px;
  margin-left: 22px;
}

/* page frame */
.middle {
  display: flex;
  flex: 1;
  min-height: 0;
}
.page {
  display: flex;
  flex-direction: column;
  width: 1872px;
  height: 1004px;
  margin-left: 4px;
  background: #fcfcfc;
  border-radius: 8px;
  overflow: hidden;
  box-shadow: 0 0 2px rgba(0, 0, 0, 0.3);
}
.viewport {
  display: flex;
  height: 989px;
  overflow: hidden;
}
.menu {
  position: relative;
  z-index: 2;
  display: flex;
  flex-direction: column;
  gap: 3.2px;
  flex: none;
  width: 250px;
  padding: 8px;
  background: #343a40;
  box-shadow: 0 14px 28px rgba(0, 0, 0, 0.25), 0 10px 10px rgba(0, 0, 0, 0.22);
}
.item {
  display: flex;
  align-items: center;
  height: 40px;
  flex: none;
  padding-left: 16px;
  border-radius: 4px;
  font: 14.3px/24px "Noto Sans CJK SC", sans-serif;
  color: #c2c7d0;
}
.parent { padding: 0 14px 0 20px; }
.parent span {
  flex: 1;
  margin-left: 10px;
}
.active {
  background: #494e52;
  color: #fff;
}
.grid {
  width: 19px;
  height: 17px;
  margin-top: -2px;
  fill: currentColor;
}
.chev {
  width: 12px;
  height: 12px;
  fill: none;
  stroke: currentColor;
  stroke-width: 2.6;
}
.content {
  width: 1607px;
  flex: none;
  background: #f4f6f9;
}
.cards {
  display: flex;
  gap: 15px;
}
.card {
  flex: 1;
  height: 112px;
  padding: 9px 10px 10px;
  border-radius: 4px;
  color: #fff;
  box-shadow: 0 0 1px rgba(0, 0, 0, 0.13), 0 1px 3px rgba(0, 0, 0, 0.2);
  font-family: "Noto Sans CJK SC", sans-serif;
}
.card h3 {
  margin: 0 0 11px;
  font-size: 31.5px;
  line-height: 42px;
  font-weight: 700;
}
.card p {
  margin: 0;
  font-size: 14.3px;
  line-height: 24px;
}
.warning { background: #ffc107; color: #1f2d3d; }
.success { background: #28a745; }
.danger { background: #dc3545; }

/* charts */
.map { position: relative; height: 451px; }
.chart { height: 426px; }
.canvas {
  width: 100%;
  height: 100%;
}
.title {
  font-size: 13px;
  font-weight: 700;
  text-anchor: middle;
}
.land path {
  stroke: #666;
  stroke-opacity: 0.45;
  stroke-width: 1.6;
  stroke-linejoin: round;
}
.tip {
  position: absolute;
  left: 597px;
  top: 126px;
  width: 151px;
  height: 58px;
  padding: 6px 5px;
  border: 1px solid #e0e0e0;
  border-radius: 3px;
  border-spacing: 0;
  background: rgba(255, 255, 255, 0.95);
  box-shadow: 2px 2px 4px rgba(0, 0, 0, 0.1);
  font-size: 11px;
  line-height: 13px;
  color: #000;
}
.tip td {
  padding: 4px 2px;
  white-space: nowrap;
}
.tip .key {
  padding-right: 3px;
  color: #808080;
  text-align: right;
}
.actions {
  position: absolute;
  left: 1131px;
  top: 20px;
  width: 28px;
  height: 28px;
  padding: 6px;
  border: 1px solid #aaa;
  border-radius: 50%;
  background: #fff;
  box-shadow: 1px 1px 3px rgba(0, 0, 0, 0.2);
  fill: #1b1e23;
}
.gridlines path { stroke: #ddd; }
.bars rect { fill: #5276a9; }
.axis path {
  fill: none;
  stroke: #888;
}
.labels { font-size: 10px; }
.end { text-anchor: end; }
.ytitle {
  font-size: 11px;
  font-weight: 700;
  text-anchor: middle;
  fill: #5276a7;
}
.dots circle {
  fill: #f00;
  fill-opacity: 0.7;
}

/* scrollbars */
.vbar {
  display: flex;
  flex-direction: column;
  align-items: center;
  width: 15px;
  padding: 10px 0 10px;
  fill: #8b8b8b;
}
.vbar svg { width: 10px; height: 6px; }
.vbar i {
  width: 9px;
  height: 742px;
  margin: 7px 0 auto;
  border-radius: 5px;
  background: #8b8b8b;
}
.hbar {
  display: flex;
  align-items: center;
  height: 15px;
  padding: 0 23px 0 8px;
  fill: #8b8b8b;
}
.hbar svg { width: 6px; height: 10px; }
.hbar i {
  width: 1733px;
  height: 9px;
  margin: 0 auto 0 9px;
  border-radius: 5px;
  background: #8b8b8b;
}

/* browser side rail */
.rail {
  display: flex;
  flex-direction: column;
  align-items: center;
  gap: 22px;
  flex: 1;
  padding: 13px 0 13px;
  margin-left: -1px;
}
.rail svg { width: 18px; height: 18px; }
.rail hr {
  width: 28px;
  margin: 0;
  border: 0;
  border-top: 1px solid #bbb;
}
.rail .upper { margin-top: 1px; }
.rail .lower { margin-bottom: -9px; }
.rail .line {
  fill: none;
  stroke: #222;
  stroke-width: 1.2;
}
.gap { flex: 1; }
.taskbar {
  height: 2px;
  flex: none;
  background: #2d302f;
}
.taskbar i {
  display: block;
  width: 36px;
  height: 2px;
  margin-left: 667px;
  background: #666;
}
</style>
